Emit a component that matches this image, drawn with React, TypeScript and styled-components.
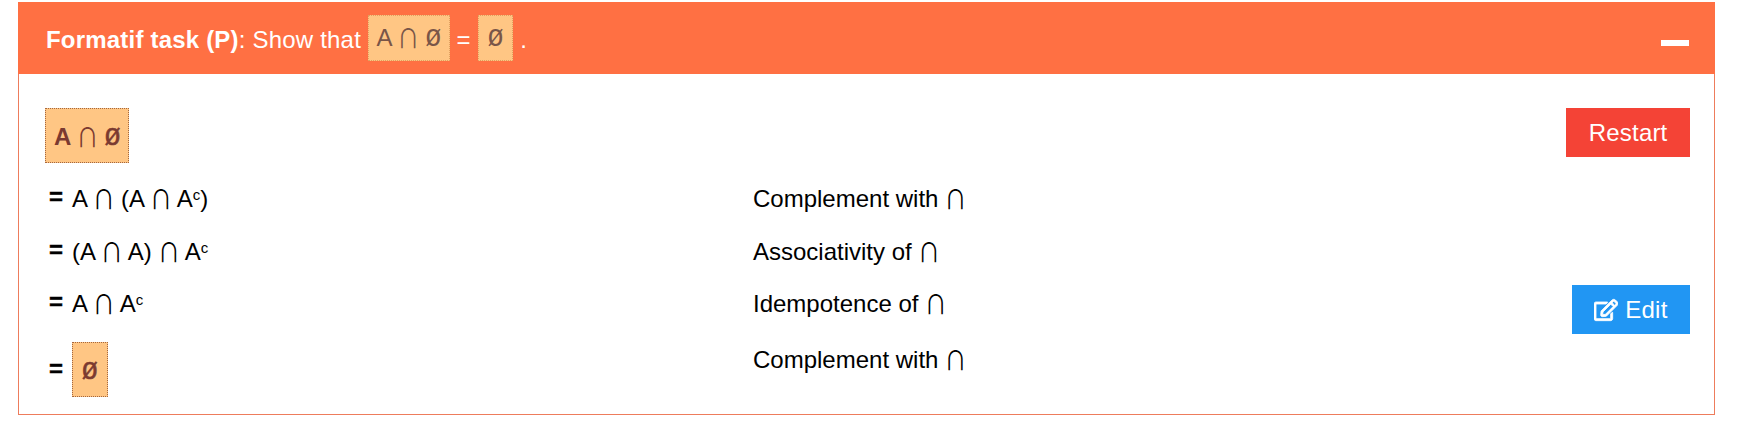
import React from "react";
import styled, { createGlobalStyle } from "styled-components";
import { FaRegEdit } from "react-icons/fa";

const GlobalStyle = createGlobalStyle`
  html, body {
    margin: 0;
    padding: 0;
    background: #fff;
    font-family: "Liberation Sans", Arial, sans-serif;
    color: #000;
  }
`;

const Page = styled.div`
  padding: 2px 33px 0 18px;
  width: 1697px;
`;

const Header = styled.div`
  height: 72px;
  background: #ff7043;
  color: #fff;
  display: flex;
  align-items: center;
  justify-content: space-between;
  padding: 0 26px 0 28px;
  font-size: 24px;
`;

const Title = styled.div`
  letter-spacing: 0.2px;
  white-space: pre;
  padding-top: 8px;
`;

const Gap = styled.span`
  margin: 0 7px;
`;

const Pill = styled.span<{ $big?: boolean; $wide?: boolean }>`
  display: inline-block;
  box-sizing: border-box;
  background: #ffc684;
  border: 1px dotted #a5673f;
  color: #7b3a30;
  font-weight: ${(p) => (p.$big ? 700 : 400)};
  height: ${(p) => (p.$big ? 55 : 46)}px;
  line-height: ${(p) => (p.$big ? 55 : 44)}px;
  padding: 0 ${(p) => (p.$wide ? 9 : 8)}px;
  white-space: pre;
`;

const HeaderPill = styled(Pill)`
  border-color: #e0a060;
  color: #795548;
  font-weight: 400;
  padding: 0 ${(p) => (p.$wide ? 9 : 7.5)}px;
  margin-top: -8px;
  letter-spacing: 0;
  vertical-align: middle;
`;

const Cap = styled.span`
  display: inline-block;
  font-family: "Noto Sans CJK SC", sans-serif;
  font-size: 22px;
  font-weight: 400;
  line-height: 0;
  margin: 0 -0.5px;
  transform: scaleY(1.2);
  transform-origin: 50% 85%;
`;

const Empty = styled.span<{ $bold?: boolean }>`
  font-family: "Liberation Mono", monospace;
  font-size: 26px;
  font-weight: 400;
  line-height: 0;
  -webkit-text-stroke: ${(p) => (p.$bold ? "0.6px" : "0")};
`;

const Minus = styled.span`
  width: 28px;
  height: 6px;
  background: #fff;
  margin-top: 10px;
`;

const Panel = styled.div`
  box-sizing: border-box;
  height: 341px;
  border: 1px solid #ee7c5c;
  border-top: none;
  padding: 34px 24px 0 26px;
`;

const Row = styled.div<{ $h: number }>`
  display: grid;
  grid-template-columns: 708px 1fr auto;
  height: ${(p) => p.$h}px;
  font-size: 24px;
  line-height: 28px;
`;

const Expr = styled.div<{ $top?: number }>`
  display: flex;
  align-items: flex-start;
  padding-top: ${(p) => p.$top ?? 5}px;
`;

const Eq = styled.span<{ $middle?: boolean }>`
  font-weight: 700;
  width: 27px;
  padding-left: 4px;
  box-sizing: border-box;
  flex: none;
  -webkit-text-stroke: 0.4px;
  margin-top: ${(p) => (p.$middle ? 13 : -2)}px;
`;

const Sup = styled.sup`
  font-size: 15px;
  line-height: 0;
  vertical-align: 7px;
`;

const Button = styled.button<{ $bg: string }>`
  border: none;
  background: ${(p) => p.$bg};
  color: #fff;
  height: 49px;
  padding: 0 22.5px;
  font: 24px "Liberation Sans", Arial, sans-serif;
  letter-spacing: 0.2px;
  display: inline-flex;
  align-items: center;
  gap: 7px;
`;

const Text = styled.div<{ $top?: number }>`
  padding-top: ${(p) => p.$top ?? 5}px;
`;

const I = () => <Cap>∩</Cap>;
const O = ({ bold }: { bold?: boolean }) => <Empty $bold={bold}>Ø</Empty>;

const App: React.FC = () => (
  <Page>
    <GlobalStyle />
    <Header>
      <Title>
        <strong>Formatif task (P)</strong>: Show that{" "}
        <HeaderPill>
          A <I /> <O />
        </HeaderPill>
        <Gap>=</Gap>
        <HeaderPill $wide>
          <O />
        </HeaderPill>{" "}
        .
      </Title>
      <Minus />
    </Header>
    <Panel>
      <Row $h={72}>
        <Expr $top={0}>
          <Pill $big>
            A <I /> <O bold />
          </Pill>
        </Expr>
        <span />
        <Button $bg="#f44336">Restart</Button>
      </Row>
      <Row $h={53}>
        <Expr>
          <Eq>=</Eq>
          <span>
            A <I /> (A <I /> A<Sup>c</Sup>)
          </span>
        </Expr>
        <Text>
          Complement with <I />
        </Text>
      </Row>
      <Row $h={52}>
        <Expr>
          <Eq>=</Eq>
          <span>
            (A <I /> A) <I /> A<Sup>c</Sup>
          </span>
        </Expr>
        <Text>
          Associativity of <I />
        </Text>
      </Row>
      <Row $h={57}>
        <Expr>
          <Eq>=</Eq>
          <span>
            A <I /> A<Sup>c</Sup>
          </span>
        </Expr>
        <Text>
          Idempotence of <I />
        </Text>
        <Button $bg="#2196f3">
          <FaRegEdit size={24} stroke="currentColor" strokeWidth={20} />
          Edit
        </Button>
      </Row>
      <Row $h={55}>
        <Expr $top={0}>
          <Eq $middle>=</Eq>
          <Pill $big $wide>
            <O bold />
          </Pill>
        </Expr>
        <Text $top={4}>
          Complement with <I />
        </Text>
      </Row>
    </Panel>
  </Page>
);

export default App;
